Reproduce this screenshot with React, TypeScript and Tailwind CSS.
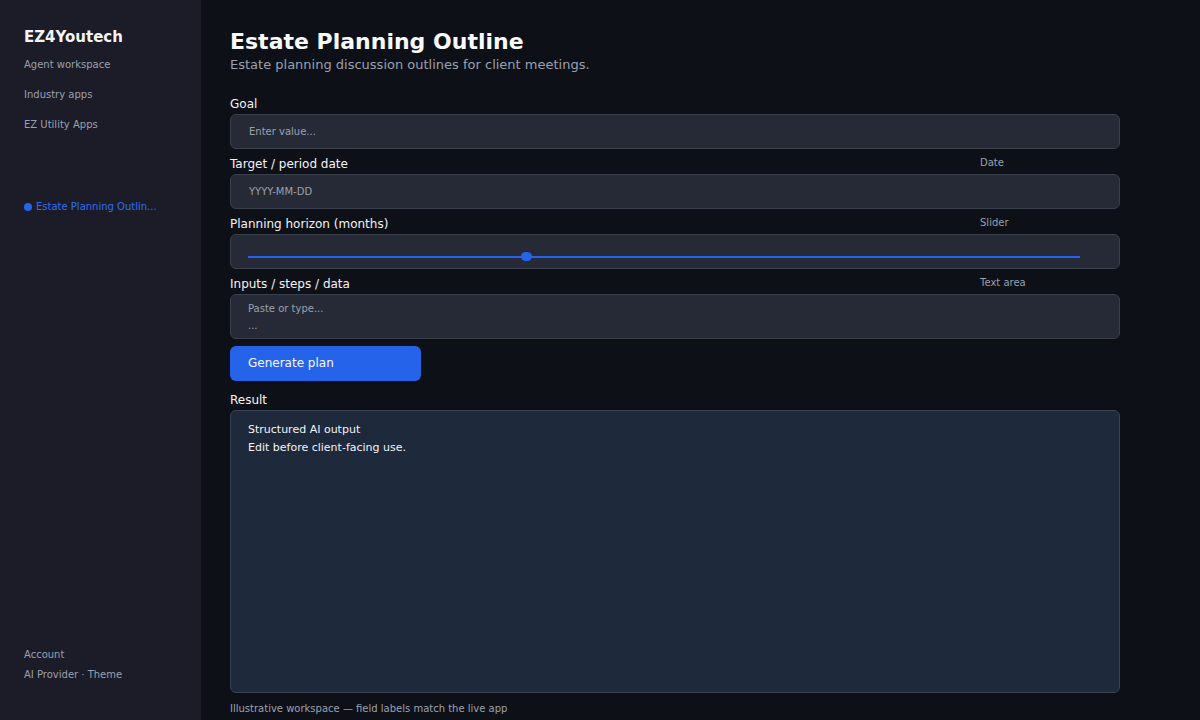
const font = { fontFamily: '"DejaVu Sans", "Noto Sans", sans-serif' }

function FieldLabel({ label, hint }: { label: string; hint?: string }) {
  return (
    <div className="flex items-start h-[20px] pt-[1px]">
      <span className="flex-1 text-[12px] leading-[18px] text-gray-100">{label}</span>
      {hint && <span className="w-[140px] text-[10px] leading-[16px] text-gray-400">{hint}</span>}
    </div>
  )
}

export default function App() {
  const sliderPct = 33.4

  return (
    <div style={font} className="flex w-[1200px] h-[720px] overflow-hidden bg-[#0e1018]">
      <aside className="w-[201px] shrink-0 bg-[#1b1c28] flex flex-col px-6 pt-[28px] pb-[38px]">
        <div className="text-[15px] leading-[18px] font-bold text-gray-100">EZ4Youtech</div>
        <nav className="mt-[12px] flex flex-col gap-[16px] text-[10px] leading-[14px] text-gray-400">
          <span>Agent workspace</span>
          <span>Industry apps</span>
          <span>EZ Utility Apps</span>
        </nav>
        <div className="mt-[68px] flex items-center gap-[4px] text-[10px] leading-[14px] text-[#2f6df0] whitespace-nowrap">
          <span className="w-[8px] h-[8px] rounded-full bg-[#2563eb]" />
          <span>Estate Planning Outlin...</span>
        </div>
        <div className="mt-auto flex flex-col gap-[6px] text-[10px] leading-[14px] text-gray-400">
          <span>Account</span>
          <span>AI Provider · Theme</span>
        </div>
      </aside>

      <main className="flex-1 pl-[29px] pr-[80px] pt-[28px]">
        <h1 className="text-[22px] leading-[28px] font-bold text-gray-50">Estate Planning Outline</h1>
        <p className="text-[13px] leading-[18px] text-gray-400">Estate planning discussion outlines for client meetings.</p>

        <div className="mt-[20px] flex flex-col gap-[5px]">
          <div>
            <FieldLabel label="Goal" />
            <div className="h-[35px] rounded-md border border-[#3a3f4c] bg-[#262a36] flex items-center px-[18px] text-[10px] text-gray-400">
              Enter value...
            </div>
          </div>
          <div>
            <FieldLabel label="Target / period date" hint="Date" />
            <div className="h-[35px] rounded-md border border-[#3a3f4c] bg-[#262a36] flex items-center px-[18px] text-[10px] text-gray-400">
              YYYY-MM-DD
            </div>
          </div>
          <div>
            <FieldLabel label="Planning horizon (months)" hint="Slider" />
            <div className="h-[35px] rounded-md border border-[#3a3f4c] bg-[#262a36] pl-[17px] pr-[39px] pt-[21px]">
              <div className="relative h-[2px] bg-[#2563eb]">
                <span
                  className="absolute top-[-4px] w-[11px] h-[9px] -ml-[5px] rounded-full bg-[#2563eb]"
                  style={{ left: `${sliderPct}%` }}
                />
              </div>
            </div>
          </div>
          <div>
            <FieldLabel label="Inputs / steps / data" hint="Text area" />
            <div className="h-[45px] rounded-md border border-[#3a3f4c] bg-[#262a36] px-[17px] pt-[5px] text-[10px] leading-[17px] text-gray-400">
              <div>Paste or type...</div>
              <div>...</div>
            </div>
          </div>
        </div>

        <button className="mt-[7px] w-[191px] h-[35px] rounded-md bg-[#2563eb] text-left px-[18px] pb-[2px] text-[12px] text-gray-50">
          Generate plan
        </button>

        <div className="mt-[9px]">
          <FieldLabel label="Result" />
          <div className="h-[283px] rounded-md border border-[#3a4354] bg-[#1e293b] px-[17px] pt-[10px] text-[11px] leading-[18px] text-gray-100">
            <div>Structured AI output</div>
            <div>Edit before client-facing use.</div>
          </div>
        </div>

        <p className="mt-[9px] text-[10px] leading-[14px] text-gray-400">Illustrative workspace — field labels match the live app</p>
      </main>
    </div>
  )
}
